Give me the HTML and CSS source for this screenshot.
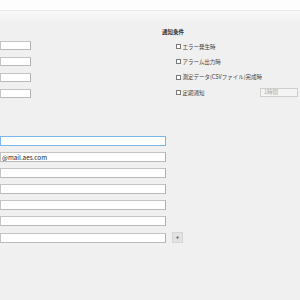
FILE: index.html
```html
<!DOCTYPE html>
<html lang="ja">
<head>
    <meta charset="UTF-8">
    <meta name="viewport" content="width=device-width, initial-scale=1.0">
    <title>通知設定</title>
    <link rel="stylesheet" href="styles.css">
</head>
<body>
    <div class="title-bar"></div>
    <div class="tab-strip"></div>

    <div class="settings">
        <div class="top-row">
            <!-- left column is scrolled out of view, only the input ends show -->
            <div class="short-fields">
                <input class="field" type="text">
                <input class="field" type="text">
                <input class="field" type="text">
                <input class="field" type="text">
            </div>

            <div class="notify">
                <div class="notify-title">通知条件</div>
                <label class="check-row"><span class="check"></span>エラー発生時</label>
                <label class="check-row"><span class="check"></span>アラーム出力時</label>
                <label class="check-row"><span class="check"></span>測定データ(CSVファイル)完成時</label>
                <label class="check-row">
                    <span class="check"></span>定期通知
                    <span class="select">1時間</span>
                </label>
            </div>
        </div>

        <div class="mail-list">
            <input class="field wide focused" type="text">
            <input class="field wide" type="text" value="@mail.aes.com">
            <input class="field wide" type="text">
            <input class="field wide" type="text">
            <input class="field wide" type="text">
            <input class="field wide" type="text">
            <div class="mail-row">
                <input class="field wide" type="text">
                <button class="add-btn">+</button>
            </div>
        </div>
    </div>
</body>
</html>
```

FILE: styles.css
```css
* {
    margin: 0;
    padding: 0;
    box-sizing: border-box;
    font-family: 'Noto Sans CJK JP', 'Noto Sans', sans-serif;
}

body {
    background-color: #f0f0f0;
    color: #222;
    width: 300px;
    height: 300px;
    overflow: hidden;
}

.title-bar {
    height: 10px;
    background: #fdfdfd;
}

.tab-strip {
    height: 11px;
    border-top: 1px solid #ebebeb;
    background: linear-gradient(#f8f8f8, #f3f3f3);
}

.top-row {
    display: flex;
}

.short-fields {
    width: 31px;
    margin-top: 20px;
    display: flex;
    flex-direction: column;
    gap: 7px;
}

.field {
    display: block;
    width: 100%;
    height: 9px;
    border: 1px solid #c4c4c4;
    border-right-color: #b0b0b0;
    border-bottom-color: #bababa;
    background: #fff;
    outline: none;
    font-size: 6.3px;
    line-height: 7px;
    padding: 0 1px;
    color: #1e1e1e;
}

.notify {
    margin-left: 131px;
    padding-top: 8px;
    flex: 1;
}

.notify-title {
    font-size: 5.5px;
    line-height: 7px;
    height: 7px;
    font-weight: bold;
    color: #333;
    margin-bottom: 3px;
}

.check-row {
    display: flex;
    align-items: center;
    height: 15.33px;
    padding-left: 14px;
    font-size: 5.5px;
    color: #444;
}

.check {
    width: 5px;
    height: 5px;
    border: 1px solid #7a7a7a;
    background: #fff;
    margin-right: 1.5px;
    flex-shrink: 0;
}

.select {
    margin-left: auto;
    margin-right: 2px;
    width: 38px;
    height: 9px;
    border: 1px solid #cfcfcf;
    background: #f4f4f4;
    color: #a8a8a8;
    padding-left: 3px;
    line-height: 7px;
    font-size: 5.5px;
}

.mail-list {
    margin-top: 36px;
    width: 166px;
    display: flex;
    flex-direction: column;
    gap: 6px;
}

.field.wide {
    height: 10px;
}

.field.focused {
    border-color: #7db6e8;
}

.mail-row {
    display: flex;
    align-items: center;
}

.add-btn {
    flex-shrink: 0;
    width: 11px;
    height: 11px;
    margin-left: 6px;
    margin-right: -17px;
    border: 1px solid #d6d6d6;
    background: #e2e2e2;
    color: #555;
    font-size: 6px;
    line-height: 8px;
    font-weight: bold;
}
```
